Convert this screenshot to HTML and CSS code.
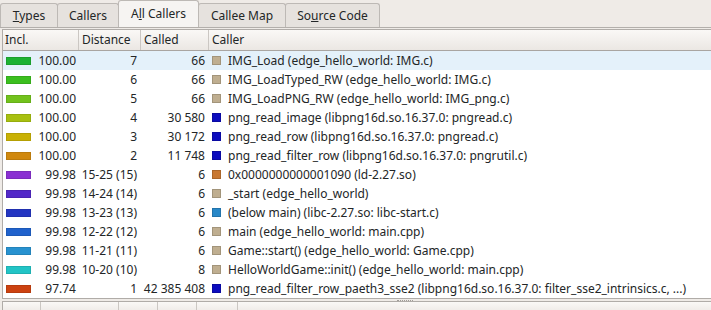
FILE: index.html
```html
<!DOCTYPE html>
<html lang="en">
  <head>
    <meta charset="UTF-8" />
    <title>All Callers</title>
    <link rel="stylesheet" href="styles.css">
  </head>
  <body>
    <div class="tab-bar">
      <div class="tab tab-types"><span><u>T</u>ypes</span></div>
      <div class="tab tab-callers"><span>Callers</span></div>
      <div class="tab tab-all tab-active"><span>A<u>l</u>l Callers</span></div>
      <div class="tab tab-map"><span>Callee Map</span></div>
      <div class="tab tab-source"><span>So<u>u</u>rce Code</span></div>
    </div>

    <div class="frame">
      <div class="row header">
        <div class="cell">Incl.</div>
        <div class="cell">Distance</div>
        <div class="cell">Called</div>
        <div class="cell">Caller</div>
      </div>
      <div class="rows"></div>
    </div>

    <div class="splitter"><span class="handle"></span></div>

    <div class="frame frame-bottom">
      <div class="header-strip">
        <div class="strip-cell" style="width: 37px"></div>
        <div class="strip-cell" style="width: 77px"></div>
        <div class="strip-cell" style="width: 38px"></div>
        <div class="strip-cell" style="width: 38px"></div>
        <div class="strip-cell" style="width: 40px"></div>
      </div>
    </div>

    <script>
      let callers = [
        ['#1db232', '100.00', '7', '66', '#bfae90', 'IMG_Load (edge_hello_world: IMG.c)'],
        ['#3cbf1e', '100.00', '6', '66', '#bfae90', 'IMG_LoadTyped_RW (edge_hello_world: IMG.c)'],
        ['#72c21c', '100.00', '5', '66', '#bfae90', 'IMG_LoadPNG_RW (edge_hello_world: IMG_png.c)'],
        ['#a8c010', '100.00', '4', '30 580', '#0c0cbe', 'png_read_image (libpng16d.so.16.37.0: pngread.c)'],
        ['#c9b104', '100.00', '3', '30 172', '#0c0cbe', 'png_read_row (libpng16d.so.16.37.0: pngread.c)'],
        ['#d0880e', '100.00', '2', '11 748', '#0c0cbe', 'png_read_filter_row (libpng16d.so.16.37.0: pngrutil.c)'],
        ['#8a30d2', '99.98', '15-25 (15)', '6', '#c87832', '0x0000000000001090 (ld-2.27.so)'],
        ['#5228c8', '99.98', '14-24 (14)', '6', '#bfae90', '_start (edge_hello_world)'],
        ['#2436c2', '99.98', '13-23 (13)', '6', '#2888c8', '(below main) (libc-2.27.so: libc-start.c)'],
        ['#2062cc', '99.98', '12-22 (12)', '6', '#bfae90', 'main (edge_hello_world: main.cpp)'],
        ['#2892d0', '99.98', '11-21 (11)', '6', '#bfae90', 'Game::start() (edge_hello_world: Game.cpp)'],
        ['#22c4c6', '99.98', '10-20 (10)', '8', '#bfae90', 'HelloWorldGame::init() (edge_hello_world: main.cpp)'],
        ['#cc4210', '97.74', '1', '42 385 408', '#0c0cbe', 'png_read_filter_row_paeth3_sse2 (libpng16d.so.16.37.0: filter_sse2_intrinsics.c, ...)']
      ];

      let rows = document.querySelector('.rows');

      for (let i = 0; i < callers.length; i++) {
        let item = callers[i];
        let row = document.createElement('div');
        row.className = i === 0 ? 'row selected' : 'row';
        row.innerHTML =
          '<div class="cell cell-incl"><span class="bar" style="background-color: ' + item[0] + '"></span><span>' + item[1] + '</span></div>' +
          '<div class="cell cell-num">' + item[2] + '</div>' +
          '<div class="cell cell-num">' + item[3] + '</div>' +
          '<div class="cell cell-caller"><span class="swatch" style="background-color: ' + item[4] + '"></span><span>' + item[5] + '</span></div>';
        rows.appendChild(row);
      }
    </script>
  </body>
</html>
```

FILE: styles.css
```css
body {
  margin: 0;
  width: 711px;
  height: 310px;
  overflow: hidden;
  background-color: #efebe7;
  font-family: "Noto Sans", sans-serif;
  font-size: 12px;
  color: #232627;
}
.tab-bar {
  display: flex;
  align-items: flex-end;
  height: 27px;
  border-bottom: 1px solid #b3afab;
}
.tab {
  box-sizing: border-box;
  display: flex;
  justify-content: center;
  align-items: center;
  height: 24px;
  margin-left: -1px;
  border: 1px solid #bdb9b5;
  border-bottom: none;
  border-radius: 3px 3px 0 0;
  background-color: #e6e2de;
}
.tab-types {
  width: 58px;
  margin-left: 0;
}
.tab-callers {
  width: 62px;
}
.tab-all {
  width: 81px;
}
.tab-map {
  width: 88px;
}
.tab-source {
  width: 95px;
}
.tab-active {
  height: 27px;
  padding-bottom: 2px;
  background-color: #f6f4f2;
}
.frame {
  margin: 1px -4px 0 2px;
  border: 1px solid #b0aca8;
  background-color: #fff;
}
.row {
  display: grid;
  grid-template-columns: 76px 62px 68px 1fr;
  height: 19px;
  line-height: 19px;
  white-space: nowrap;
}
.header {
  height: 20px;
  line-height: 20px;
  background: linear-gradient(#faf8f6, #ebe7e3);
  border-bottom: 1px solid #a9a5a1;
}
.header .cell {
  padding-left: 3px;
  border-right: 1px solid #cbc7c3;
}
.header .cell:first-child {
  padding-left: 2px;
}
.cell {
  box-sizing: border-box;
  overflow: hidden;
}
.selected {
  background-color: #e4f1fa;
}
.cell-incl {
  display: flex;
  align-items: center;
  justify-content: space-between;
  padding: 0 3px 0 3px;
}
.bar {
  width: 25px;
  height: 8px;
  box-shadow: inset 0 0 0 1px rgba(0, 0, 0, 0.1);
}
.cell-num {
  text-align: right;
  padding-right: 4px;
}
.cell-caller {
  display: flex;
  align-items: center;
  gap: 7px;
  padding-left: 3px;
}
.swatch {
  flex: none;
  width: 9px;
  height: 9px;
  box-shadow: inset 0 0 0 1px rgba(0, 0, 0, 0.15);
}
.splitter {
  display: flex;
  height: 2px;
  padding-left: 397px;
}
.handle {
  width: 16px;
  margin-top: 1px;
  border-top: 1px dotted #a09c98;
}
.frame-bottom {
  margin-top: 0;
  height: 12px;
}
.header-strip {
  display: flex;
  height: 12px;
  background: linear-gradient(#faf8f6, #ebe7e3);
}
.strip-cell {
  border-right: 1px solid #cbc7c3;
}
```
